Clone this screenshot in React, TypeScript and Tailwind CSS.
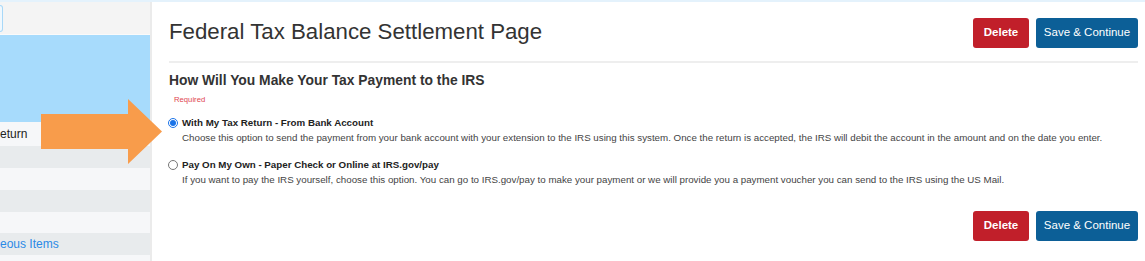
import React from 'react';

const font = { fontFamily: '"Liberation Sans", Arial, sans-serif' };

function Buttons() {
  return (
    <div className="flex gap-[7px]">
      <button className="h-[30px] w-[56px] rounded-[3px] bg-[#c11f2a] text-[11.5px] font-bold text-white">Delete</button>
      <button className="h-[30px] w-[102px] rounded-[3px] bg-[#0c5f97] text-[11.5px] text-white">Save &amp; Continue</button>
    </div>
  );
}

function Option({ checked, label, text }: { checked?: boolean; label: string; text: string }) {
  return (
    <div className="flex items-start gap-[4px]">
      <input type="radio" name="pay" defaultChecked={checked} className="-ml-[1px] mt-[1px] h-[10px] w-[10px] accent-[#1a73e8]" />
      <div>
        <div className="text-[9.75px] font-bold leading-[12px] text-[#222]">{label}</div>
        <div className="mt-[3px] text-[9.75px] leading-[12px] text-[#444]">{text}</div>
      </div>
    </div>
  );
}

export default function App() {
  return (
    <div className="relative flex h-[261px] w-[1145px] overflow-hidden border-t-2 border-[#e4f2fc] bg-white" style={font}>
      {/* Sidebar */}
      <div className="w-[152px] shrink-0 border-r-2 border-[#ebebeb]">
        <div className="flex h-[33px] items-center bg-[#f4f4f4] border-b border-[#fafafa]">
          <div className="h-[27px] w-[3px] rounded-r-[3px] border border-l-0 border-[#a8d8f8] bg-[#f0f8fe]" />
        </div>
        <div className="h-[87px] bg-[#a7dbfc]" />
        <div className="flex h-[24px] items-center bg-[#f6f7f9] text-[12px] text-[#222]">eturn</div>
        <div className="h-[22px] bg-[#e8ebed]" />
        <div className="h-[22px] bg-[#f6f7f9]" />
        <div className="h-[22px] bg-[#e8ebed]" />
        <div className="h-[21px] bg-[#f6f7f9]" />
        <div className="flex h-[22px] items-center bg-[#e8ebed] text-[12px] text-[#2b8ae6]">eous Items</div>
        <div className="h-[10px] bg-[#f6f7f9]" />
      </div>

      {/* Main */}
      <div className="flex-1 pl-[17px] pr-[7px]">
        <div className="flex items-center justify-between pt-[15px]">
          <h1 className="-mt-[2px] text-[22.25px] text-[#333]">Federal Tax Balance Settlement Page</h1>
          <Buttons />
        </div>
        <div className="mt-[13px] h-[2px] bg-[#eeeeee]" />
        <h2 className="mt-[7px] text-[13.85px] font-bold text-[#333]">How Will You Make Your Tax Payment to the IRS</h2>
        <div className="ml-[5px] mt-[3px] text-[7.7px] text-[#e0454f]">Required</div>
        <div className="mt-[11px] flex flex-col gap-[15px]">
          <Option
            checked
            label="With My Tax Return - From Bank Account"
            text="Choose this option to send the payment from your bank account with your extension to the IRS using this system. Once the return is accepted, the IRS will debit the account in the amount and on the date you enter."
          />
          <Option
            label="Pay On My Own - Paper Check or Online at IRS.gov/pay"
            text="If you want to pay the IRS yourself, choose this option. You can go to IRS.gov/pay to make your payment or we will provide you a payment voucher you can send to the IRS using the US Mail."
          />
        </div>
        <div className="mt-[25px] flex justify-end">
          <Buttons />
        </div>
      </div>

      {/* Arrow overlay */}
      <svg className="pointer-events-none absolute left-0 top-0" width="170" height="170">
        <polygon points="41,112 128,112 128,97 162,129.5 128,162 128,147 41,147" fill="#f89c4b" />
      </svg>
    </div>
  );
}
